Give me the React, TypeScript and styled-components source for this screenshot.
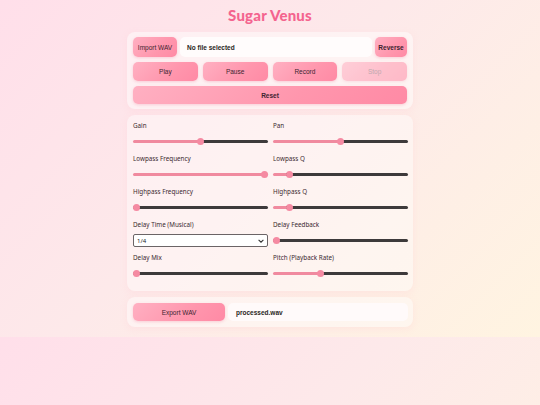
import React from "react";
import styled, { createGlobalStyle } from "styled-components";

const GlobalStyle = createGlobalStyle`
  body {
    margin: 0;
    font-family: "Noto Sans", "Liberation Sans", sans-serif;
    background: linear-gradient(135deg, #ffdfea 0%, #fde9ea 45%, #fff4e1 100%);
    color: #3c2a30;
  }
`;

const sliders = {
  gain: 50,
  pan: 50,
  lowFreq: 100,
  lowQ: 10,
  highFreq: 0,
  highQ: 10,
  feedback: 0,
  mix: 0,
  pitch: 34,
};

const Slider = ({ value }: { value: number }) => (
  <RangeInput
    type="range"
    min={0}
    max={100}
    defaultValue={value}
    style={{
      background: `linear-gradient(to right, #f08a9f 0%, #f08a9f ${value}%, #3d3a3b ${value}%, #3d3a3b 100%)`,
    }}
  />
);

const App = () => {
  return (
    <>
      <GlobalStyle />
      <Page>
        <Title>Sugar Venus</Title>

        <Panel>
          <FileRow>
            <PinkButton $w="44px" $h="20px">
              Import WAV
            </PinkButton>
            <FileName>No file selected</FileName>
            <PinkButton $w="32px" $h="20px" $bold>
              Reverse
            </PinkButton>
          </FileRow>
          <TransportRow>
            <PinkButton>Play</PinkButton>
            <PinkButton>Pause</PinkButton>
            <PinkButton>Record</PinkButton>
            <PinkButton disabled>Stop</PinkButton>
          </TransportRow>
          <PinkButton $bold $h="18px">
            Reset
          </PinkButton>
        </Panel>

        <ControlsPanel>
          <Field>
            <Label>Gain</Label>
            <Slider value={sliders.gain} />
          </Field>
          <Field>
            <Label>Pan</Label>
            <Slider value={sliders.pan} />
          </Field>
          <Field>
            <Label>Lowpass Frequency</Label>
            <Slider value={sliders.lowFreq} />
          </Field>
          <Field>
            <Label>Lowpass Q</Label>
            <Slider value={sliders.lowQ} />
          </Field>
          <Field>
            <Label>Highpass Frequency</Label>
            <Slider value={sliders.highFreq} />
          </Field>
          <Field>
            <Label>Highpass Q</Label>
            <Slider value={sliders.highQ} />
          </Field>
          <Field>
            <Label>Delay Time (Musical)</Label>
            <SelectBox>
              <span>1/4</span>
              <svg width="6" height="4" viewBox="0 0 10 6">
                <path d="M1 1l4 4 4-4" fill="none" stroke="#333" strokeWidth="1.8" />
              </svg>
            </SelectBox>
          </Field>
          <Field>
            <Label>Delay Feedback</Label>
            <Slider value={sliders.feedback} />
          </Field>
          <Field>
            <Label>Delay Mix</Label>
            <Slider value={sliders.mix} />
          </Field>
          <Field>
            <Label>Pitch (Playback Rate)</Label>
            <Slider value={sliders.pitch} />
          </Field>
        </ControlsPanel>

        <ExportPanel>
          <PinkButton $w="92px" $h="18px">
            Export WAV
          </PinkButton>
          <FileName $light>processed.wav</FileName>
        </ExportPanel>
      </Page>
    </>
  );
};

const Page = styled.div`
  width: 286px;
  margin: 0 auto;
  padding: 0 0 10px;
  display: flex;
  flex-direction: column;
  gap: 6px;
`;

const Title = styled.h1`
  margin: 0;
  height: 22px;
  padding-top: 4px;
  display: flex;
  align-items: center;
  justify-content: center;
  font-family: "Lato", "Liberation Sans", sans-serif;
  font-weight: 900;
  font-size: 15px;
  letter-spacing: 0.2px;
  color: #f4648f;
`;

const Panel = styled.section`
  background: rgba(255, 255, 255, 0.45);
  border-radius: 8px;
  padding: 5px 6px;
  display: flex;
  flex-direction: column;
  gap: 5px;
  box-shadow: 0 2px 6px rgba(255, 200, 210, 0.25);
`;

const FileRow = styled.div`
  display: flex;
  gap: 3px;
  height: 20px;
`;

const TransportRow = styled.div`
  display: grid;
  grid-template-columns: repeat(4, 1fr);
  gap: 5px;
`;

const PinkButton = styled.button<{ $w?: string; $h?: string; $bold?: boolean }>`
  width: ${(p) => p.$w || "auto"};
  height: ${(p) => p.$h || "19px"};
  flex-shrink: 0;
  border: none;
  border-radius: 5px;
  padding: 0;
  background: linear-gradient(135deg, #ffb0c2 0%, #ff96ad 60%, #ff8aa5 100%);
  box-shadow: 0 1px 3px rgba(240, 120, 150, 0.3);
  font-family: "Liberation Sans", Arial, sans-serif;
  font-size: 6.5px;
  font-weight: ${(p) => (p.$bold ? 700 : 400)};
  color: #3d2430;
  cursor: pointer;

  &:disabled {
    opacity: 0.55;
    color: #8a6a74;
    cursor: default;
  }
`;

const FileName = styled.div<{ $light?: boolean }>`
  flex: 1;
  display: flex;
  align-items: center;
  padding-left: ${(p) => (p.$light ? "8px" : "7px")};
  background: ${(p) => (p.$light ? "rgba(255,250,252,0.85)" : "rgba(255,255,255,0.75)")};
  border-radius: 5px;
  font-family: "Liberation Sans", Arial, sans-serif;
  font-weight: 700;
  font-size: 6.5px;
  color: #2a1f22;
`;

const ControlsPanel = styled.section`
  background: rgba(255, 255, 255, 0.4);
  border-radius: 8px;
  padding: 6px 5px 10px 6px;
  display: grid;
  grid-template-columns: 1fr 1fr;
  column-gap: 5px;
  row-gap: 5px;
  box-shadow: 0 2px 6px rgba(255, 200, 210, 0.25);
`;

const Field = styled.div`
  display: flex;
  flex-direction: column;
  gap: 5px;
`;

const Label = styled.label`
  font-size: 6.3px;
  line-height: 9px;
  color: #3c2a30;
`;

const RangeInput = styled.input`
  -webkit-appearance: none;
  appearance: none;
  width: 100%;
  height: 3px;
  margin: 5px 0 6px;
  border-radius: 2px;
  outline: none;

  &::-webkit-slider-thumb {
    -webkit-appearance: none;
    appearance: none;
    width: 7px;
    height: 7px;
    border-radius: 50%;
    background: #f58aa2;
    border: none;
  }
`;

const SelectBox = styled.div`
  height: 13px;
  box-sizing: border-box;
  border: 1px solid #6b6466;
  border-radius: 2px;
  background: #ffffff;
  display: flex;
  align-items: center;
  justify-content: space-between;
  padding: 0 3px;
  font-size: 6px;
  color: #222;
`;

const ExportPanel = styled.section`
  background: rgba(255, 255, 255, 0.4);
  border-radius: 8px;
  padding: 6px 5px 6px 6px;
  display: flex;
  gap: 3px;
  box-shadow: 0 2px 6px rgba(255, 200, 210, 0.25);
`;

export default App;
